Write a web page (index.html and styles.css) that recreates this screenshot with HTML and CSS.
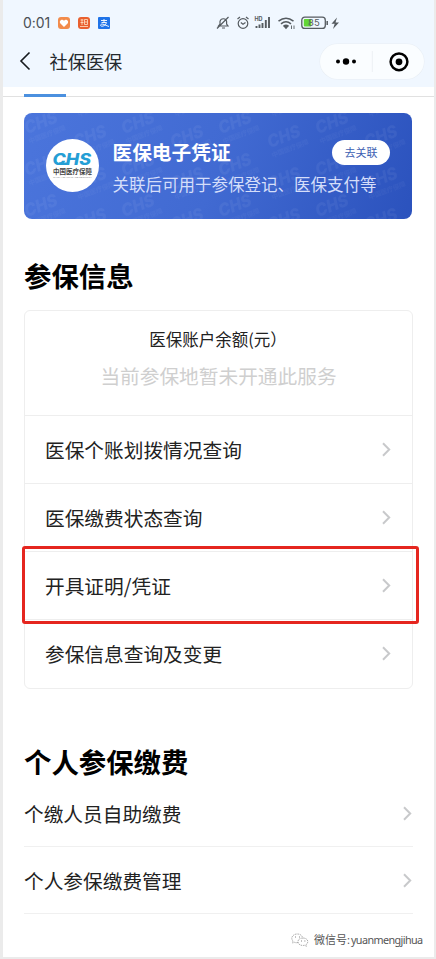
FILE: index.html
```html
<!DOCTYPE html>
<html lang="zh-CN">
<head>
<meta charset="utf-8">
<title>社保医保</title>
<link rel="stylesheet" href="styles.css">
</head>
<body>
<div class="phone">
  <header class="top">
    <div class="status">
      <div class="status-left">
        <span class="clock">0:01</span>
        <svg class="app" viewBox="0 0 12 12"><rect width="12" height="12" rx="3" fill="#f28b4b"/><path d="M6 10 2.200 6.200C.8 4 4 1.500 6 3.700c2-2.200 5.200.3 3.800 2.500z" fill="#fff"/></svg>
        <svg class="app" viewBox="0 0 12 12"><rect width="12" height="12" rx="3" fill="#e9602f"/><path d="M2.500 3h3M4 2v6M2.500 5.500h3M6.500 2.500h3v5h-3zM6.500 5h3M2 9.500h8" stroke="#ffe4ca" stroke-width=".8" fill="none"/></svg>
        <svg class="app" viewBox="0 0 12 12"><rect width="12" height="12" rx="1" fill="#1f73e8"/><path d="M3 3.500h6M6 2v3.500M3.500 5.500h5C8 8 5.500 9.500 3.500 9.200 1.500 8.500 3 6.500 5 7.200L11 9.500" stroke="#fff" stroke-width=".9" fill="none"/></svg>
      </div>
      <svg class="status-icons" viewBox="0 0 126 16" fill="none" stroke="#555b60" stroke-width="1.200">
        <path d="M3.500 11h9.500l-1.400-2V6.500C11 3 6 2.800 5 6.300V9zM7 13h3M13.500 2 2 13.500"/>
        <circle cx="28" cy="8.500" r="4.800"/><path d="m22.500 4 2.500-2M33.500 4 31 2M25.800 7.500 28 9.300l2.500-1.800"/>
        <text class="hd" x="39.500" y="5.500">HD</text>
        <path d="M41.500 13v-2M44.500 13V9.500M47.500 13V8M50.800 13V5M54 13V2" stroke-width="1.900"/>
        <path d="M63.500 6.200q7.500-6 15 0M66 8.800q5-4 10 0M68.500 11.200q2.500-2 5 0" stroke-width="1.500"/><path d="m69.500 11.500 1.500 1.800 1.500-1.800z" fill="#555b60"/><path d="M76.500 10.500v3.500M79 10.500v3.500" stroke-width=".9"/>
        <rect x="86.800" y="2.200" width="23.500" height="11.200" rx="3" stroke-width="1.300"/><rect x="88.800" y="4" width="7.500" height="7.600" rx="1" fill="#62d634" stroke="none"/><path d="M112.200 6v4" stroke-width="1.500"/>
        <text class="battery" x="93" y="11.300">85</text>
        <path d="m122 2.500-5.500 6.200h3.200L118 14l6-6.500h-3.500z" fill="#555b60" stroke="none"/>
      </svg>
    </div>
    <nav class="nav">
      <svg class="back" viewBox="0 0 12 20"><path d="M10.500 1.500 2 10l8.500 8.500" fill="none" stroke="#15191d" stroke-width="1.600"/></svg>
      <h1>社保医保</h1>
      <div class="capsule">
        <svg viewBox="0 0 104 35"><circle cx="18" cy="17.500" r="2" /><circle cx="26" cy="17.500" r="3.200"/><circle cx="34" cy="17.500" r="2"/><path d="M52.300 7v21" stroke="#edf1f4"/><circle cx="79" cy="17.800" r="8.400" fill="none" stroke="#000" stroke-width="2.500"/><circle cx="79" cy="17.800" r="3.400"/></svg>
      </div>
    </nav>
  </header>
  <div class="tabs"><div class="tab-active"></div></div>
  <main>
    <section class="banner">
      <svg class="pattern" viewBox="0 0 388 106">
        <defs><pattern id="marks" width="97" height="83" patternUnits="userSpaceOnUse" patternTransform="translate(-5 -7)">
          <g id="mark" transform="translate(8 28) rotate(-21)"><text class="mark" textLength="34" lengthAdjust="spacingAndGlyphs">CHS</text><text class="mark-small" x="-1" y="10">中国医疗保障</text></g>
          <use href="#mark" x="49" y="14"/><use href="#mark" y="42"/><use href="#mark" x="49" y="-27"/><use href="#mark" x="49" y="56"/>
        </pattern></defs>
        <rect width="388" height="106" fill="url(#marks)"/>
      </svg>
      <svg class="logo" viewBox="0 0 53 53"><circle cx="26.500" cy="26.500" r="26.500" fill="#fff"/>
        <text class="chs" x="6.500" y="26" textLength="38.500" lengthAdjust="spacingAndGlyphs">CHS</text>
        <path d="M13 24.800h9" stroke="#249ed5" stroke-width="2.400"/>
        <text class="cn" x="7" y="35" textLength="39" lengthAdjust="spacingAndGlyphs">中国医疗保障</text>
        <text class="en" x="7" y="39" textLength="39" lengthAdjust="spacingAndGlyphs">CHINA HEALTHCARE SECURITY</text></svg>
      <div class="banner-copy">
        <div class="banner-head"><h2>医保电子凭证</h2><span class="link">去关联</span></div>
        <p>关联后可用于参保登记、医保支付等</p>
      </div>
    </section>
    <h2 class="heading">参保信息</h2>
    <section class="card">
      <div class="balance"><div class="label">医保账户余额(元）</div><div class="empty">当前参保地暂未开通此服务</div></div>
      <div class="row"><span>医保个账划拨情况查询</span><svg class="chev" viewBox="0 0 9 15"><path d="m1 1.300 6.200 6.200L1 13.700"/></svg></div>
      <div class="row"><span>医保缴费状态查询</span><svg class="chev" viewBox="0 0 9 15"><path d="m1 1.300 6.200 6.200L1 13.700"/></svg></div>
      <div class="row marked"><span>开具证明/凭证</span><svg class="chev" viewBox="0 0 9 15"><path d="m1 1.300 6.200 6.200L1 13.700"/></svg></div>
      <div class="row"><span>参保信息查询及变更</span><svg class="chev" viewBox="0 0 9 15"><path d="m1 1.300 6.200 6.200L1 13.700"/></svg></div>
    </section>
    <h2 class="heading second">个人参保缴费</h2>
    <div class="item"><span>个缴人员自助缴费</span><svg class="chev" viewBox="0 0 9 15"><path d="m1 1.300 6.200 6.200L1 13.700"/></svg></div>
    <div class="item"><span>个人参保缴费管理</span><svg class="chev" viewBox="0 0 9 15"><path d="m1 1.300 6.200 6.200L1 13.700"/></svg></div>
  </main>
  <footer>
    <svg viewBox="0 0 18 14"><path d="M7 9.500q-2 .5-3.500-.2L1.500 10l.5-2C-1 5 2 1 6 1q4.500 0 5.500 3.500M12 5c-7 0-6.500 7.500 0 7.500l1.500-.2 2 1-.3-1.800C18.500 9 16.500 5 12 5z" fill="#fff" stroke="#888" stroke-width=".7" stroke-dasharray="1.500 .8"/><path d="M4 4h.8M8 4h.8M10 8h.8M13.500 8h.8" stroke="#666"/></svg>
    <span>微信号:</span><span class="account">yuanmengjihua</span>
  </footer>
</div>
</body>
</html>
```
FILE: styles.css
```css
*, *::after { box-sizing: border-box; }
body { margin: 0; font-family: "Noto Sans CJK SC", sans-serif; color: #222; }
h1, h2, p { margin: 0; }
svg { display: block; flex: none; }
.phone { width: 436px; height: 959px; border: solid #ebebeb; border-width: 0 2px 2px 3px; background: #fff; overflow: hidden; display: flex; flex-direction: column; }
.top { height: 87px; flex: none; background: #f0f7ff; padding-top: 12px; }
.status { height: 21px; display: flex; justify-content: space-between; align-items: center; padding: 0 93px 0 20px; }
.status-left { display: flex; align-items: center; }
.clock { font: 14px/20px Inter, sans-serif; color: #4b5055; width: 35px; letter-spacing: -.1px; white-space: nowrap; }
.app { width: 12px; height: 12px; margin-right: 8px; }
.status-icons { width: 126px; height: 16px; }
.hd { font: bold 5.500px Inter, sans-serif; fill: #555b60; stroke: none; }
.battery { font: 9.500px Inter, sans-serif; fill: #555b60; stroke: none; }
.nav { height: 36px; margin-top: 10px; padding: 0 10px 0 16px; display: flex; align-items: center; }
.back { width: 12px; height: 20px; }
h1 { font-size: 18.200px; line-height: 26px; font-weight: 400; margin-left: 18.500px; color: #24292e; }
.capsule { margin-left: auto; width: 104px; height: 35px; border-radius: 18px; background: #fafdff; box-shadow: 0 0 0 .5px #e8eef4; }
.capsule svg { width: 104px; height: 35px; }
.tabs { height: 10px; flex: none; border-bottom: 1px solid #e1e1e1; padding: 7px 0 0 21px; }
.tab-active { width: 42px; height: 3px; background: #4b90df; }
main { padding: 16px 22px 0 21px; }
.banner { position: relative; width: 388px; height: 106px; border-radius: 8px; overflow: hidden; background: linear-gradient(110deg, #4b75dc, #416ad2 50%, #2b52bd); display: flex; padding: 26px 22px 0; }
.pattern { position: absolute; left: 0; top: 0; width: 388px; height: 106px; }
.mark { font: italic 800 17px Inter, sans-serif; fill: #fff; fill-opacity: .05; }
.mark-small { font: bold 6.500px "Noto Sans CJK SC", sans-serif; fill: #fff; fill-opacity: .04; }
.logo { position: relative; width: 53px; height: 53px; }
.chs { font: italic 800 15.500px Inter, sans-serif; fill: #249ed5; }
.cn { font: bold 6.300px "Noto Sans CJK SC", sans-serif; fill: #444; }
.en { font: 2.500px "Liberation Sans", sans-serif; fill: #888; }
.banner-copy { position: relative; width: 279px; margin-left: 13.500px; color: #fff; }
.banner-head { height: 26px; display: flex; justify-content: space-between; align-items: center; }
.banner h2 { font-size: 19.700px; line-height: 26px; font-weight: 700; white-space: nowrap; }
.link { width: 58px; height: 25px; border-radius: 13px; background: #fff; color: #3d60b2; font-size: 11px; line-height: 25px; text-align: center; }
.banner p { font-size: 16.500px; line-height: 24px; margin-top: 7px; color: #d5defa; white-space: nowrap; }
.heading { font-size: 27.400px; line-height: 40px; margin-top: 36px; font-weight: 700; color: #000; }
.card { width: 389px; height: 379px; margin-top: 15px; border: 1px solid #eee; border-radius: 6px; }
.balance { height: 104px; padding-top: 16px; }
.label { font-size: 16.500px; line-height: 24px; text-align: center; padding-right: 1px; color: #222; }
.empty { font-size: 19.700px; line-height: 28px; margin-top: 11px; text-align: center; color: #cfcfcf; }
.row { height: 68px; border-top: 1px solid #eee; padding: 0 21px 0 20px; display: flex; align-items: center; justify-content: space-between; font-size: 19.700px; }
.marked { position: relative; }
.marked::after { content: ""; position: absolute; left: -3px; top: -6px; width: 397px; height: 78px; border: 3px solid #e5261f; border-radius: 3px; }
.chev { width: 9px; height: 15px; fill: none; stroke: #c8c9cb; stroke-width: 2; }
.heading.second { margin-top: 52px; }
.item { height: 67px; width: 389px; border-bottom: 1px solid #f0f0f0; display: flex; align-items: center; justify-content: space-between; padding-right: 1px; font-size: 19.700px; }
.heading.second + .item { margin-top: -1px; }
footer { display: flex; align-items: center; margin: 18px 0 0 288px; font: 11px/16px "Noto Sans", "Noto Sans CJK SC", sans-serif; color: #555; white-space: nowrap; }
footer svg { width: 18px; height: 14px; margin-right: 5px; }
.account { margin-left: 1px; font-size: 10.800px; letter-spacing: -.6px; }
```
